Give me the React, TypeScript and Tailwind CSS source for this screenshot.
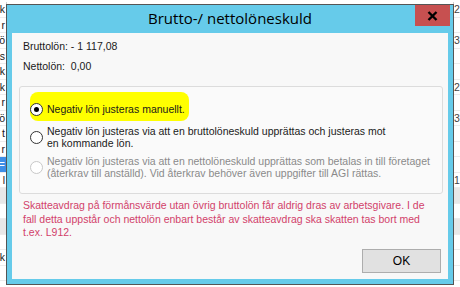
import React from "react";

const leftRows = ["k", "r", "ö", "s", "k", "k", "r", "ö", "t", "r", "=", "l", "", "", "", "", "k", ""];
const rightRows = ["2", "", "3", "", "", "2", "", "3", "", "", "", "1", "", "", "", "", "", ""];

const Radio: React.FC<{ checked?: boolean; disabled?: boolean }> = ({ checked, disabled }) => (
  <span
    className={`flex h-[13px] w-[13px] shrink-0 items-center justify-center rounded-full border bg-white ${
      disabled ? "border-[#c8c8c8]" : "border-[#333]"
    }`}
  >
    {checked && <span className="h-[5px] w-[5px] rounded-full bg-black" />}
  </span>
);

const App: React.FC = () => {
  return (
    <div
      className="relative h-[287px] w-[460px] overflow-hidden bg-white text-[10.5px] text-[#1a1a1a]"
      style={{ fontFamily: '"Liberation Sans", Arial, sans-serif' }}
    >
      {/* Background grid behind the dialog */}
      <div className="flex flex-col pt-[2px]">
        {leftRows.map((t, i) => (
          <div
            key={i}
            className={`flex h-[15.5px] items-center border-b border-[#ececec] ${
              i === 12 || i === 14 ? "bg-[#e8e8e8]" : ""
            }`}
          >
            <div
              className={`flex h-full w-[7px] items-center justify-end border-r border-[#d0d0d0] ${
                i === 10 ? "bg-[#3d8ee6] text-white" : ""
              }`}
            >
              <span className="pr-[1px] leading-none">{t}</span>
            </div>
            <div className="flex-1" />
            <div className="flex h-full w-[7px] items-center border-l border-[#d0d0d0]">
              <span className="leading-none text-[#444]">{rightRows[i]}</span>
            </div>
          </div>
        ))}
      </div>

      {/* Dialog */}
      <div className="absolute left-[6px] top-[4px] flex h-[281px] w-[448px] flex-col border border-[#555] bg-[#66cbea]">
        <div className="relative flex h-[28px] items-center justify-center pb-[2px]">
          <span
            className="text-[15px] leading-none text-black"
            style={{ fontFamily: '"Open Sans", "Noto Sans", sans-serif' }}
          >
            Brutto-/ nettolöneskuld
          </span>
          <div className="absolute right-[3px] top-0 flex h-[21px] w-[35px] items-center justify-center bg-[#c75050]">
            <svg width="11" height="10" viewBox="0 0 11 10">
              <path d="M1.5 1 L9.5 9 M9.5 1 L1.5 9" stroke="black" strokeWidth="2.4" />
            </svg>
          </div>
        </div>

        <div className="mx-[5px] mb-[5px] flex flex-1 flex-col bg-[#f8f8f8] pl-[7px] pr-[5px] pt-[7px] leading-[13px]">
          <div className="whitespace-nowrap pl-[4px]">Bruttolön: - 1 117,08</div>
          <div className="mt-[7px] whitespace-nowrap pl-[4px]">Nettolön:&nbsp;&nbsp;0,00</div>

          <div className="mt-[13px] flex flex-col rounded-[3px] border border-[#dcdcdc] bg-[#fafafa] pb-[14px] pl-[10px] pt-[5px]">
            <div className="flex">
              <div className="flex items-center gap-[4px] rounded-[8px] bg-[#ffff00] pb-[5px] pr-[4px] pt-[11px]">
                <Radio checked />
                <span className="whitespace-nowrap">Negativ lön justeras manuellt.</span>
              </div>
            </div>
            <div className="mt-[4px] flex items-center gap-[4px]">
              <Radio />
              <span className="whitespace-nowrap leading-[12px]">
                Negativ lön justeras via att en bruttolöneskuld upprättas och justeras mot
                <br />
                en kommande lön.
              </span>
            </div>
            <div className="mt-[6px] flex items-center gap-[4px] text-[#8a8a8a]">
              <Radio disabled />
              <span className="whitespace-nowrap leading-[12px]">
                Negativ lön justeras via att en nettolöneskuld upprättas som betalas in till företaget
                <br />
                (återkrav till anställd). Vid återkrav behöver även uppgifter till AGI rättas.
              </span>
            </div>
          </div>

          <p className="mt-[5px] whitespace-nowrap pl-[4px] leading-[13.5px] text-[#d23f6a]">
            Skatteavdrag på förmånsvärde utan övrig bruttolön får aldrig dras av arbetsgivare. I de
            <br />
            fall detta uppstår och nettolön enbart består av skatteavdrag ska skatten tas bort med
            <br />
            t.ex. L912.
          </p>

          <div className="mb-[6px] mt-auto flex justify-end pr-[2px]">
            <button className="h-[24px] w-[79px] border border-[#adadad] bg-[#e1e1e1] text-[12px] leading-none text-black">
              OK
            </button>
          </div>
        </div>
      </div>
    </div>
  );
};

export default App;
